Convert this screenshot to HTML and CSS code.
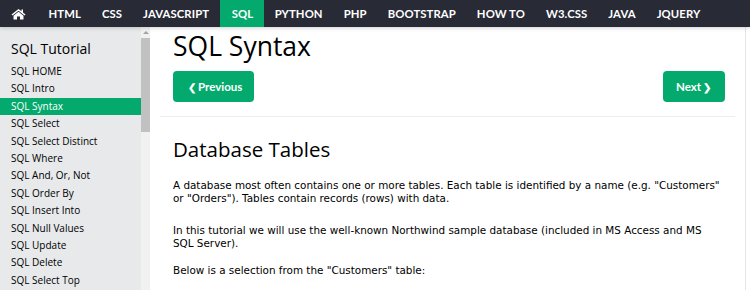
FILE: index.html
```html
<!DOCTYPE html>
<html>
<head>
<meta charset="utf-8">
<link rel="stylesheet" href="styles.css">
</head>
<body>
<nav class="topnav">
  <a class="nav-item home" href="#"><svg width="15" height="12" viewBox="0 0 30 24"><path fill="#fff" d="M15 2 L1 13 L3 15 L15 5.5 L27 15 L29 13 L24 9 L24 3 L21 3 L21 6.6 Z M5 15.5 L5 23 L12 23 L12 17 L18 17 L18 23 L25 23 L25 15.5 L15 7.5 Z"/></svg></a>
  <a class="nav-item" href="#">HTML</a>
  <a class="nav-item" href="#">CSS</a>
  <a class="nav-item" href="#">JAVASCRIPT</a>
  <a class="nav-item active" href="#">SQL</a>
  <a class="nav-item" href="#">PYTHON</a>
  <a class="nav-item" href="#">PHP</a>
  <a class="nav-item" href="#">BOOTSTRAP</a>
  <a class="nav-item" href="#">HOW TO</a>
  <a class="nav-item" href="#">W3.CSS</a>
  <a class="nav-item" href="#">JAVA</a>
  <a class="nav-item" href="#">JQUERY</a>
</nav>
<div class="layout">
  <aside class="sidebar">
    <div class="side-list">
      <h2 class="side-title">SQL Tutorial</h2>
      <a class="side-link" href="#">SQL HOME</a>
      <a class="side-link" href="#">SQL Intro</a>
      <a class="side-link current" href="#">SQL Syntax</a>
      <a class="side-link" href="#">SQL Select</a>
      <a class="side-link" href="#">SQL Select Distinct</a>
      <a class="side-link" href="#">SQL Where</a>
      <a class="side-link" href="#">SQL And, Or, Not</a>
      <a class="side-link" href="#">SQL Order By</a>
      <a class="side-link" href="#">SQL Insert Into</a>
      <a class="side-link" href="#">SQL Null Values</a>
      <a class="side-link" href="#">SQL Update</a>
      <a class="side-link" href="#">SQL Delete</a>
      <a class="side-link" href="#">SQL Select Top</a>
    </div>
    <div class="scrollbar">
      <div class="arrow"></div>
      <div class="thumb"></div>
    </div>
  </aside>
  <main class="main">
    <div class="inner">
      <h1 class="title">SQL Syntax</h1>
      <div class="pager">
        <a class="btn" href="#"><span class="chev">&#10094;</span> Previous</a>
        <a class="btn" href="#">Next <span class="chev">&#10095;</span></a>
      </div>
    </div>
    <hr class="rule">
    <div class="inner">
      <h2 class="subtitle">Database Tables</h2>
      <p class="para">A database most often contains one or more tables. Each table is identified by a name (e.g. "Customers" or "Orders"). Tables contain records (rows) with data.</p>
      <p class="para">In this tutorial we will use the well-known Northwind sample database (included in MS Access and MS SQL Server).</p>
      <p class="para tight">Below is a selection from the "Customers" table:</p>
    </div>
  </main>
  <div class="rightcol"></div>
</div>
</body>
</html>
```
FILE: styles.css
```css
html, body {
  margin: 0;
  padding: 0;
  height: 290px;
  overflow: hidden;
  background: #fff;
}
body {
  font-family: "Open Sans", "Noto Sans", sans-serif;
  color: #000;
}
a { text-decoration: none; color: inherit; }

.topnav {
  display: flex;
  align-items: stretch;
  height: 27px;
  background: #282A35;
  padding-left: 1px;
  position: relative;
  z-index: 2;
  box-shadow: 0 1px 4px rgba(0,0,0,0.18);
}
.nav-item {
  display: flex;
  align-items: center;
  padding: 0 10.5px;
  color: #fff;
  font-family: Lato, "Open Sans", sans-serif;
  font-weight: 700;
  font-size: 11.3px;
  letter-spacing: 0.1px;
}
.nav-item.home { padding: 0 12px 0 10px; }
.nav-item.active { background: #04AA6D; padding: 0 11px 0 12px; }

.layout {
  display: flex;
  height: 263px;
}
.sidebar {
  display: flex;
  width: 150px;
  flex: none;
  background: #E7E9EB;
}
.side-list {
  width: 141px;
  display: flex;
  flex-direction: column;
}
.side-title {
  margin: 12px 0 4px 11px;
  font-weight: 400;
  font-size: 14px;
  line-height: 20px;
}
.side-link {
  display: block;
  padding: 0 11px;
  font-size: 10px;
  line-height: 17.4px;
  color: #000;
}
.side-link.current {
  background: #04AA6D;
  color: #fff;
}
.scrollbar {
  width: 9px;
  background: #F1F1F1;
  display: flex;
  flex-direction: column;
  align-items: center;
}
.arrow {
  margin-top: 4px;
  width: 0;
  height: 0;
  border-left: 3px solid transparent;
  border-right: 3px solid transparent;
  border-bottom: 3px solid #A3A3A3;
}
.thumb {
  margin-top: 4px;
  width: 9px;
  height: 94px;
  background: #C1C1C1;
}

.main {
  width: 575px;
  padding: 0 10px;
  flex: none;
}
.inner {
  padding: 0 10px 0 13px;
}
.title {
  margin: 2px 0 0;
  font-weight: 400;
  font-size: 26.5px;
  line-height: 34px;
}
.pager {
  display: flex;
  justify-content: space-between;
  margin-top: 8px;
}
.btn {
  display: flex;
  align-items: center;
  height: 31px;
  padding: 0 12px 0 13px;
  background: #04AA6D;
  color: #fff;
  border-radius: 4px;
  font-family: Lato, "Open Sans", sans-serif;
  font-weight: 700;
  font-size: 11.5px;
}
.chev { font-size: 10px; margin: 0 2px; }
.rule {
  margin: 14px 0 0;
  border: 0;
  border-top: 1px solid #EEEEEE;
}
.subtitle {
  margin: 19px 0 0;
  font-weight: 400;
  font-size: 20.5px;
  line-height: 26px;
}
.para {
  margin: 17px 0 0;
  font-family: "DejaVu Sans", Verdana, sans-serif;
  font-size: 10.4px;
  line-height: 13px;
}
.para + .para { margin-top: 19px; }
.para.tight { margin-top: 14px; }
.rightcol {
  flex: 1;
  border-left: 1px solid #E5E5E5;
}
```
